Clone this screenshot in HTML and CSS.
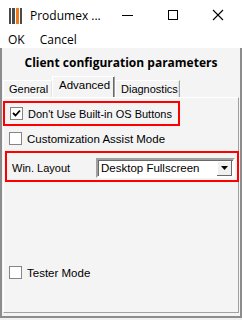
FILE: index.html
```html
<!DOCTYPE html>
<html lang="en">
<head>
    <meta charset="UTF-8">
    <meta name="viewport" content="width=device-width, initial-scale=1.0">
    <title>Produmex - Client configuration parameters</title>
    <link rel="stylesheet" href="styles.css">
</head>
<body>
    <div class="titlebar">
        <svg class="app-icon" width="14" height="16" viewBox="0 0 14 16">
            <rect x="0" y="0" width="2" height="16" fill="#4a4a4a"/>
            <rect x="3" y="0" width="3" height="16" fill="#4a4a4a"/>
            <rect x="7" y="0" width="3" height="16" fill="#f07a1e"/>
            <rect x="11" y="0" width="2" height="16" fill="#4a4a4a"/>
        </svg>
        <span class="title">Produmex ...</span>
        <div class="controls">
            <svg width="46" height="30" viewBox="0 0 46 30"><rect x="18" y="15" width="11" height="1" fill="#000"/></svg>
            <svg width="46" height="30" viewBox="0 0 46 30"><rect x="18.5" y="10.5" width="9" height="9" fill="none" stroke="#000"/></svg>
            <svg width="46" height="30" viewBox="0 0 46 30"><path d="M17 10 L27 20 M27 10 L17 20" stroke="#000" stroke-width="1.1"/></svg>
        </div>
    </div>

    <div class="menubar">
        <span>OK</span>
        <span>Cancel</span>
    </div>

    <div class="content">
        <h1>Client configuration parameters</h1>

        <div class="tabs">
            <div class="tab">General</div>
            <div class="tab active">Advanced</div>
            <div class="tab">Diagnostics</div>
        </div>

        <div class="page">
            <div class="row marked first">
                <span class="check checked">
                    <svg width="11" height="11" viewBox="0 0 11 11"><path d="M2 5 L4.5 7.5 L9 2.5" fill="none" stroke="#000" stroke-width="1.8"/></svg>
                </span>
                <span>Don't Use Built-in OS Buttons</span>
            </div>

            <div class="row">
                <span class="check"></span>
                <span>Customization Assist Mode</span>
            </div>

            <div class="layout-row marked">
                <span class="layout-label">Win. Layout</span>
                <div class="combo">
                    <span class="combo-text">Desktop Fullscreen</span>
                    <span class="combo-btn">
                        <svg width="7" height="4" viewBox="0 0 7 4"><path d="M0 0 H7 L3.5 4 Z" fill="#000"/></svg>
                    </span>
                </div>
            </div>

            <div class="row tester">
                <span class="check"></span>
                <span>Tester Mode</span>
            </div>
        </div>
    </div>
</body>
</html>
```

FILE: styles.css
```css
body {
    margin: 0;
    padding: 0;
    width: 242px;
    height: 320px;
    background-color: #f0f0f0;
    font-family: "Liberation Sans", Arial, sans-serif;
    color: #000000;
    overflow: hidden;
}

.titlebar {
    height: 30px;
    background-color: #ffffff;
    display: flex;
    align-items: center;
}

.app-icon {
    margin-left: 9px;
    margin-top: 1px;
}

.title {
    margin-left: 7px;
    font-family: "Open Sans", sans-serif;
    font-size: 12px;
}

.controls {
    margin-left: auto;
    display: flex;
}

.controls svg {
    display: block;
}

.menubar {
    height: 18px;
    background-color: #ffffff;
    display: flex;
    gap: 15px;
    padding-left: 8px;
    font-family: "Open Sans", sans-serif;
    font-size: 12px;
    line-height: 20px;
}

.content {
    height: 268px;
    background-color: #f4f4f4;
    border: 2px solid #8c8c8c;
    border-top: none;
    width: 238px;
}

h1 {
    margin: 0;
    padding-top: 7px;
    height: 21px;
    font-family: "Open Sans", sans-serif;
    font-size: 12px;
    font-weight: bold;
    text-align: center;
    line-height: 16px;
}

.tabs {
    display: flex;
    align-items: flex-end;
    height: 21px;
    padding-left: 1px;
    font-size: 11px;
}

.tab {
    height: 16px;
    line-height: 17px;
    padding: 0 5px;
    background-color: #f4f4f4;
    border: 1px solid #ffffff;
    border-right-color: #a0a0a0;
    border-bottom: none;
    box-shadow: inset -1px 0 0 #e3e3e3;
}

.tab:first-child {
    width: 38px;
}

.tab.active {
    height: 20px;
    line-height: 17px;
    padding: 0 6px;
    margin: 0 -1px;
    position: relative;
    z-index: 1;
    width: 49px;
    font-size: 11.5px;
    box-shadow: inset -1px 0 0 #696969;
}

.tab:last-child {
    width: 53px;
    margin-left: 1px;
}

.page {
    margin: 0 1px;
    height: 214px;
    border: 1px solid #ffffff;
    border-right-color: #a0a0a0;
    border-bottom-color: #a0a0a0;
    font-size: 11.5px;
    display: flex;
    flex-direction: column;
}

.row {
    display: flex;
    align-items: center;
    gap: 5px;
    padding-left: 5px;
    height: 25px;
}

.marked {
    border: 2px solid #ff0000;
    box-sizing: border-box;
}

.row.first {
    margin-top: 3px;
    margin-left: -1px;
    width: 177px;
    padding-left: 5px;
    font-size: 11px;
}

.check {
    width: 11px;
    height: 11px;
    background-color: #ffffff;
    border: 1px solid #858585;
    display: flex;
    align-items: center;
    justify-content: center;
}

.layout-row {
    margin-left: 1px;
    width: 234px;
    height: 31px;
    display: flex;
    align-items: center;
    padding-left: 5px;
    padding-top: 3px;
    font-size: 11px;
}

.layout-label {
    width: 84px;
}

.combo {
    width: 135px;
    height: 16px;
    background-color: #ffffff;
    border: 2px solid #a0a0a0;
    border-right-color: #ffffff;
    border-bottom-color: #ffffff;
    box-shadow: inset 1px 1px 0 #696969;
    display: flex;
    align-items: center;
}

.combo-text {
    padding-left: 3px;
    flex: 1;
    font-size: 11.5px;
}

.combo-btn {
    width: 15px;
    height: 15px;
    margin-right: 1px;
    background-color: #f0f0f0;
    border-right: 1px solid #696969;
    border-bottom: 1px solid #696969;
    box-sizing: border-box;
    display: flex;
    align-items: center;
    justify-content: center;
    box-shadow: inset 1px 1px 0 #ffffff;
}

.tester {
    margin-top: auto;
    margin-bottom: 27px;
}
```
